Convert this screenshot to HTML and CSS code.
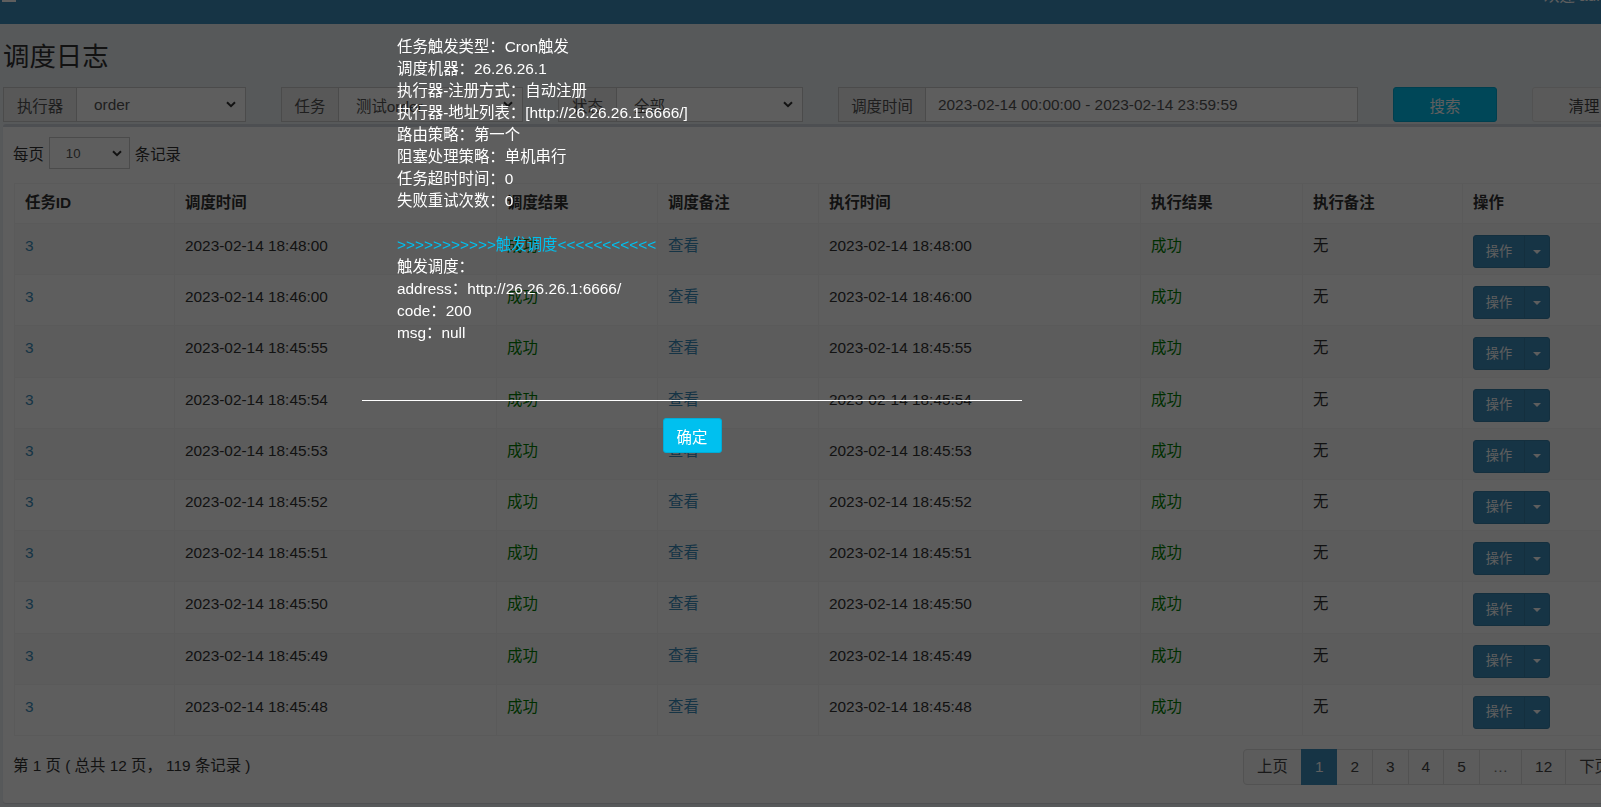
FILE: index.html
```html
<!DOCTYPE html>
<html lang="zh-CN">
<head>
<meta charset="utf-8">
<title>调度日志</title>
<link rel="stylesheet" href="styles.css">
</head>
<body>
<div class="page">
  <header class="topbar">
    <span class="toggle-bar"></span>
    <span class="welcome">欢迎 admin</span>
  </header>
  <main class="content">
    <h1 class="page-title">调度日志</h1>
    <div class="filters">
      <div class="igroup">
        <span class="addon w74">执行器</span>
        <div class="sel w169"><span>order</span><svg class="chev" width="10" height="7" viewBox="0 0 10 7"><path d="M1 1.2 L5 5.2 L9 1.2" fill="none" stroke="#333" stroke-width="2"/></svg></div>
      </div>
      <div class="igroup">
        <span class="addon w58">任务</span>
        <div class="sel w184"><span>测试order</span><svg class="chev" width="10" height="7" viewBox="0 0 10 7"><path d="M1 1.2 L5 5.2 L9 1.2" fill="none" stroke="#333" stroke-width="2"/></svg></div>
      </div>
      <div class="igroup">
        <span class="addon w59">状态</span>
        <div class="sel w186"><span>全部</span><svg class="chev" width="10" height="7" viewBox="0 0 10 7"><path d="M1 1.2 L5 5.2 L9 1.2" fill="none" stroke="#333" stroke-width="2"/></svg></div>
      </div>
      <div class="igroup">
        <span class="addon w88">调度时间</span>
        <div class="inp w432">2023-02-14 00:00:00 - 2023-02-14 23:59:59</div>
      </div>
      <button class="btn btn-search">搜索</button>
      <button class="btn btn-clear">清理</button>
    </div>

    <section class="box">
      <div class="len">
        <span>每页</span>
        <div class="sel-sm"><span>10</span><svg class="chev" width="10" height="7" viewBox="0 0 10 7"><path d="M1 1.2 L5 5.2 L9 1.2" fill="none" stroke="#333" stroke-width="2"/></svg></div>
        <span>条记录</span>
      </div>
      <table class="log-table">
        <colgroup>
          <col class="c160"><col class="c322"><col class="c161"><col class="c161"><col class="c322"><col class="c162"><col class="c160"><col class="c160">
        </colgroup>
        <thead>
          <tr><th>任务ID</th><th>调度时间</th><th>调度结果</th><th>调度备注</th><th>执行时间</th><th>执行结果</th><th>执行备注</th><th>操作</th></tr>
        </thead>
        <tbody>
          <tr><td><a class="lnk">3</a></td><td>2023-02-14 18:48:00</td><td class="ok">成功</td><td><a class="lnk">查看</a></td><td>2023-02-14 18:48:00</td><td class="ok">成功</td><td>无</td><td><span class="opbtn"><span class="op-main">操作</span><span class="op-caret"><i></i></span></span></td></tr>
          <tr><td><a class="lnk">3</a></td><td>2023-02-14 18:46:00</td><td class="ok">成功</td><td><a class="lnk">查看</a></td><td>2023-02-14 18:46:00</td><td class="ok">成功</td><td>无</td><td><span class="opbtn"><span class="op-main">操作</span><span class="op-caret"><i></i></span></span></td></tr>
          <tr><td><a class="lnk">3</a></td><td>2023-02-14 18:45:55</td><td class="ok">成功</td><td><a class="lnk">查看</a></td><td>2023-02-14 18:45:55</td><td class="ok">成功</td><td>无</td><td><span class="opbtn"><span class="op-main">操作</span><span class="op-caret"><i></i></span></span></td></tr>
          <tr><td><a class="lnk">3</a></td><td>2023-02-14 18:45:54</td><td class="ok">成功</td><td><a class="lnk">查看</a></td><td>2023-02-14 18:45:54</td><td class="ok">成功</td><td>无</td><td><span class="opbtn"><span class="op-main">操作</span><span class="op-caret"><i></i></span></span></td></tr>
          <tr><td><a class="lnk">3</a></td><td>2023-02-14 18:45:53</td><td class="ok">成功</td><td><a class="lnk">查看</a></td><td>2023-02-14 18:45:53</td><td class="ok">成功</td><td>无</td><td><span class="opbtn"><span class="op-main">操作</span><span class="op-caret"><i></i></span></span></td></tr>
          <tr><td><a class="lnk">3</a></td><td>2023-02-14 18:45:52</td><td class="ok">成功</td><td><a class="lnk">查看</a></td><td>2023-02-14 18:45:52</td><td class="ok">成功</td><td>无</td><td><span class="opbtn"><span class="op-main">操作</span><span class="op-caret"><i></i></span></span></td></tr>
          <tr><td><a class="lnk">3</a></td><td>2023-02-14 18:45:51</td><td class="ok">成功</td><td><a class="lnk">查看</a></td><td>2023-02-14 18:45:51</td><td class="ok">成功</td><td>无</td><td><span class="opbtn"><span class="op-main">操作</span><span class="op-caret"><i></i></span></span></td></tr>
          <tr><td><a class="lnk">3</a></td><td>2023-02-14 18:45:50</td><td class="ok">成功</td><td><a class="lnk">查看</a></td><td>2023-02-14 18:45:50</td><td class="ok">成功</td><td>无</td><td><span class="opbtn"><span class="op-main">操作</span><span class="op-caret"><i></i></span></span></td></tr>
          <tr><td><a class="lnk">3</a></td><td>2023-02-14 18:45:49</td><td class="ok">成功</td><td><a class="lnk">查看</a></td><td>2023-02-14 18:45:49</td><td class="ok">成功</td><td>无</td><td><span class="opbtn"><span class="op-main">操作</span><span class="op-caret"><i></i></span></span></td></tr>
          <tr><td><a class="lnk">3</a></td><td>2023-02-14 18:45:48</td><td class="ok">成功</td><td><a class="lnk">查看</a></td><td>2023-02-14 18:45:48</td><td class="ok">成功</td><td>无</td><td><span class="opbtn"><span class="op-main">操作</span><span class="op-caret"><i></i></span></span></td></tr>
        </tbody>
      </table>
      <div class="foot">
        <div class="info">第 1 页 ( 总共 12 页， 119 条记录 )</div>
        <ul class="pager">
          <li>上页</li>
          <li class="active">1</li>
          <li>2</li>
          <li>3</li>
          <li>4</li>
          <li>5</li>
          <li class="dis">…</li>
          <li>12</li>
          <li>下页</li>
        </ul>
      </div>
    </section>
  </main>
</div>

<div class="shade"></div>

<div class="layer">
  <div class="layer-body">
    <div>任务触发类型：Cron触发</div>
    <div>调度机器：26.26.26.1</div>
    <div>执行器-注册方式：自动注册</div>
    <div>执行器-地址列表：[http://26.26.26.1:6666/]</div>
    <div>路由策略：第一个</div>
    <div>阻塞处理策略：单机串行</div>
    <div>任务超时时间：0</div>
    <div>失败重试次数：0</div>
    <div class="blank"></div>
    <div class="cyan">&gt;&gt;&gt;&gt;&gt;&gt;&gt;&gt;&gt;&gt;&gt;触发调度&lt;&lt;&lt;&lt;&lt;&lt;&lt;&lt;&lt;&lt;&lt;</div>
    <div>触发调度：</div>
    <div>address：http://26.26.26.1:6666/</div>
    <div>code：200</div>
    <div>msg：null</div>
  </div>
  <div class="layer-btns"><button class="btn-ok">确定</button></div>
</div>
</body>
</html>
```

FILE: styles.css
```css
html, body {
  margin: 0;
  padding: 0;
}
body {
  width: 1601px;
  height: 807px;
  overflow: hidden;
  position: relative;
  background: #ecf0f5;
  color: #333;
  font-family: "Liberation Sans", "Noto Sans CJK SC", sans-serif;
  font-size: 15.4px;
}
.page {
  width: 1640px;
}

/* header */
.topbar {
  height: 24px;
  background: #3c8dbc;
  display: flex;
  align-items: flex-start;
}
.toggle-bar {
  display: block;
  width: 14px;
  height: 2px;
  margin-left: 2px;
  background: #fff;
}
.welcome {
  margin-left: auto;
  width: 96px;
  margin-top: -12px;
  line-height: 16px;
  color: #fff;
  white-space: nowrap;
}

/* content */
.content {
  padding: 19px 0 0 3px;
}
.page-title {
  margin: 0 0 15px;
  font-size: 26.4px;
  font-weight: 400;
  line-height: 29px;
  color: #333;
}

.filters {
  display: flex;
  gap: 35px;
  height: 35px;
}
.igroup {
  display: flex;
  height: 35px;
}
.addon {
  box-sizing: border-box;
  display: flex;
  align-items: center;
  justify-content: center;
  background: #eee;
  border: 1px solid #ccc;
  color: #555;
}
.sel, .inp {
  box-sizing: border-box;
  display: flex;
  align-items: center;
  background: #fff;
  border: 1px solid #ccc;
  border-left: 0;
  color: #555;
}
.sel {
  justify-content: space-between;
  padding: 0 9px 0 17px;
}
.inp {
  padding-left: 12px;
}
.w74 { width: 74px; }
.w58 { width: 58px; }
.w59 { width: 59px; }
.w88 { width: 88px; }
.w169 { width: 169px; }
.w184 { width: 184px; }
.w186 { width: 186px; }
.w432 { width: 432px; }

.btn {
  box-sizing: border-box;
  width: 104px;
  height: 35px;
  border-radius: 3px;
  font-family: inherit;
  font-size: 15.4px;
  padding: 0;
}
.btn-search {
  background: #00c0ef;
  border: 1px solid #00acd6;
  color: #fff;
}
.btn-clear {
  background: #f4f4f4;
  border: 1px solid #ddd;
  color: #444;
}

/* box */
.box {
  box-sizing: border-box;
  width: 1631px;
  margin-top: 2px;
  background: #fff;
  border-top: 3px solid #d2d6de;
  border-radius: 3px;
  box-shadow: 0 1px 1px rgba(0,0,0,0.1);
  padding: 10px 10px 18px 10px;
}
.len {
  display: flex;
  align-items: center;
  gap: 5px;
  height: 32px;
}
.sel-sm {
  box-sizing: border-box;
  width: 81px;
  height: 32px;
  border: 1px solid #ccc;
  display: flex;
  align-items: center;
  justify-content: space-between;
  padding: 0 7px 0 16px;
  font-size: 13.2px;
  color: #555;
}

.log-table {
  margin: 14px 0 0 1px;
  width: 1608px;
  border-collapse: collapse;
  table-layout: fixed;
  border: 1px solid #f4f4f4;
}
.c160 { width: 160px; }
.c161 { width: 161px; }
.c162 { width: 162px; }
.c322 { width: 322px; }
.log-table th, .log-table td {
  border: 1px solid #f4f4f4;
  text-align: left;
  line-height: 22px;
  white-space: nowrap;
}
.log-table th {
  padding: 8px 10px 9px;
  font-weight: 700;
}
.log-table td {
  padding: 11px 10px 6.2px;
  vertical-align: top;
}
.log-table tbody tr:nth-child(odd) {
  background: #f9f9f9;
}
.lnk {
  color: #3c8dbc;
}
.ok {
  color: green;
}
.opbtn {
  display: inline-flex;
  height: 33px;
  vertical-align: top;
  border-radius: 3px;
  background: #3c8dbc;
  border: 1px solid #367fa9;
  box-sizing: border-box;
  color: #fff;
  font-size: 13.2px;
}
.op-main {
  width: 50px;
  display: flex;
  align-items: center;
  justify-content: center;
}
.op-caret {
  width: 24px;
  display: flex;
  align-items: center;
  justify-content: center;
  border-left: 1px solid #367fa9;
}
.op-caret i {
  display: block;
  width: 0;
  height: 0;
  border-top: 4.4px solid #fff;
  border-left: 4.4px solid transparent;
  border-right: 4.4px solid transparent;
}

.foot {
  margin-top: 13px;
  display: flex;
  align-items: center;
  justify-content: space-between;
  height: 36px;
}
.info {
  margin-top: -6px;
}
.pager {
  display: flex;
  list-style: none;
  margin: 0;
  padding: 0;
}
.pager li {
  padding: 7px 13px;
  line-height: 20px;
  border: 1px solid #ddd;
  margin-left: -1px;
  background: #fafafa;
  color: #444;
}
.pager li:first-child {
  margin-left: 0;
  border-radius: 4px 0 0 4px;
}
.pager li.active {
  background: #3c8dbc;
  border-color: #3c8dbc;
  color: #fff;
  position: relative;
}
.pager li.dis {
  color: #777;
}

/* modal shade + layer */
.shade {
  position: fixed;
  inset: 0;
  background: rgba(0,0,0,0.63);
}
.layer {
  position: absolute;
  left: 362px;
  top: 36px;
  width: 660px;
  color: #fff;
}
.layer-body {
  padding: 0 0 56px 35px;
  border-bottom: 1px solid #fff;
  line-height: 22px;
  font-size: 15.4px;
}
.blank {
  height: 22px;
}
.cyan {
  color: #00c0ef;
}
.layer-btns {
  padding-top: 17px;
  display: flex;
  justify-content: center;
}
.btn-ok {
  box-sizing: border-box;
  width: 59px;
  height: 35px;
  background: #00c0ef;
  border: 1px solid #00acd6;
  border-radius: 3px;
  color: #fff;
  font-family: inherit;
  font-size: 15.4px;
  padding: 0;
}
```
